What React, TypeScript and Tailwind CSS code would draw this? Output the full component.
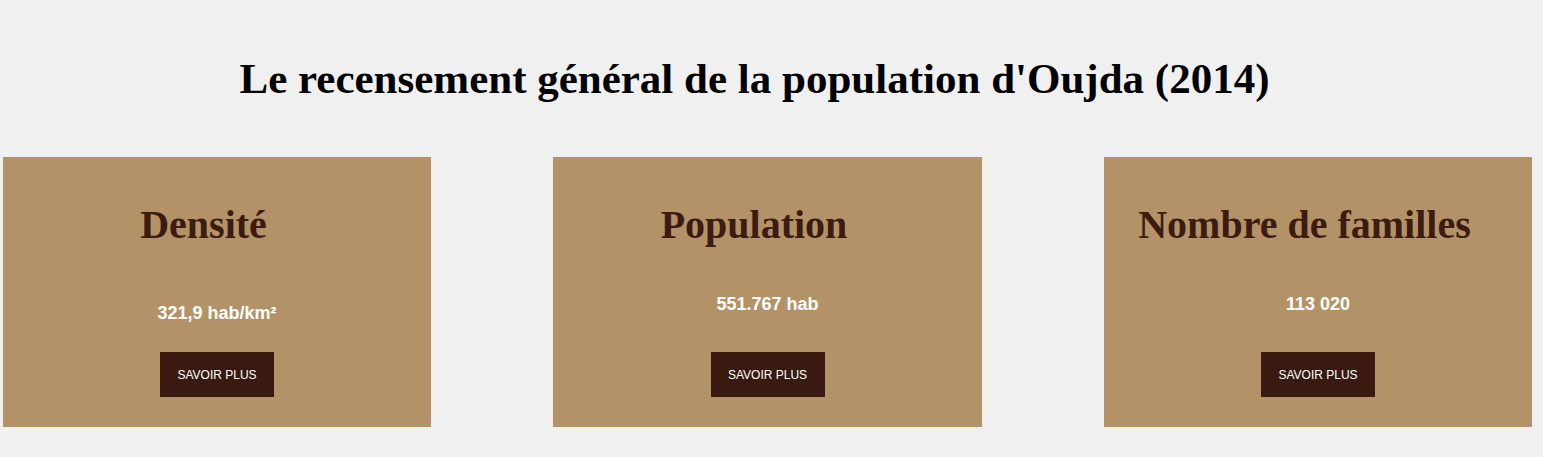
import React from "react";

const cards = [
  { title: "Densité", value: "321,9 hab/km²", w: "w-[428px]", vpad: "pt-[9px]" },
  { title: "Population", value: "551.767 hab", w: "w-[429px]", vpad: "pt-0" },
  { title: "Nombre de familles", value: "113 020", w: "w-[428px]", vpad: "pt-0" },
];

export default function App() {
  return (
    <div className="min-h-[457px] w-full bg-[#f0f0f0]">
      <h1 className="pt-[54px] pr-[34px] text-center font-['Liberation_Serif','Times_New_Roman',serif] text-[43px] leading-[49px] font-bold text-black">
        Le recensement général de la population d'Oujda (2014)
      </h1>
      <div className="mt-[54px] flex gap-[122px] pl-[3px]">
        {cards.map((c) => (
          <div key={c.title} className={`${c.w} flex h-[270px] flex-col items-center bg-[#b49267] pt-[45px]`}>
            <h2 className="w-full pr-[27px] text-center font-['Liberation_Serif','Times_New_Roman',serif] text-[40px] leading-[46px] font-bold text-[#3c1c10]">
              {c.title}
            </h2>
            <div
              className={`mt-[46px] h-[58px] w-full text-center font-['Liberation_Sans',Arial,sans-serif] text-[18px] leading-[20px] font-bold text-white ${c.vpad}`}
            >
              {c.value}
            </div>
            <button className="flex h-[45px] w-[114px] items-center justify-center bg-[#381a10] font-['Liberation_Sans',Arial,sans-serif] text-[12px] text-white">
              SAVOIR PLUS
            </button>
          </div>
        ))}
      </div>
    </div>
  );
}
